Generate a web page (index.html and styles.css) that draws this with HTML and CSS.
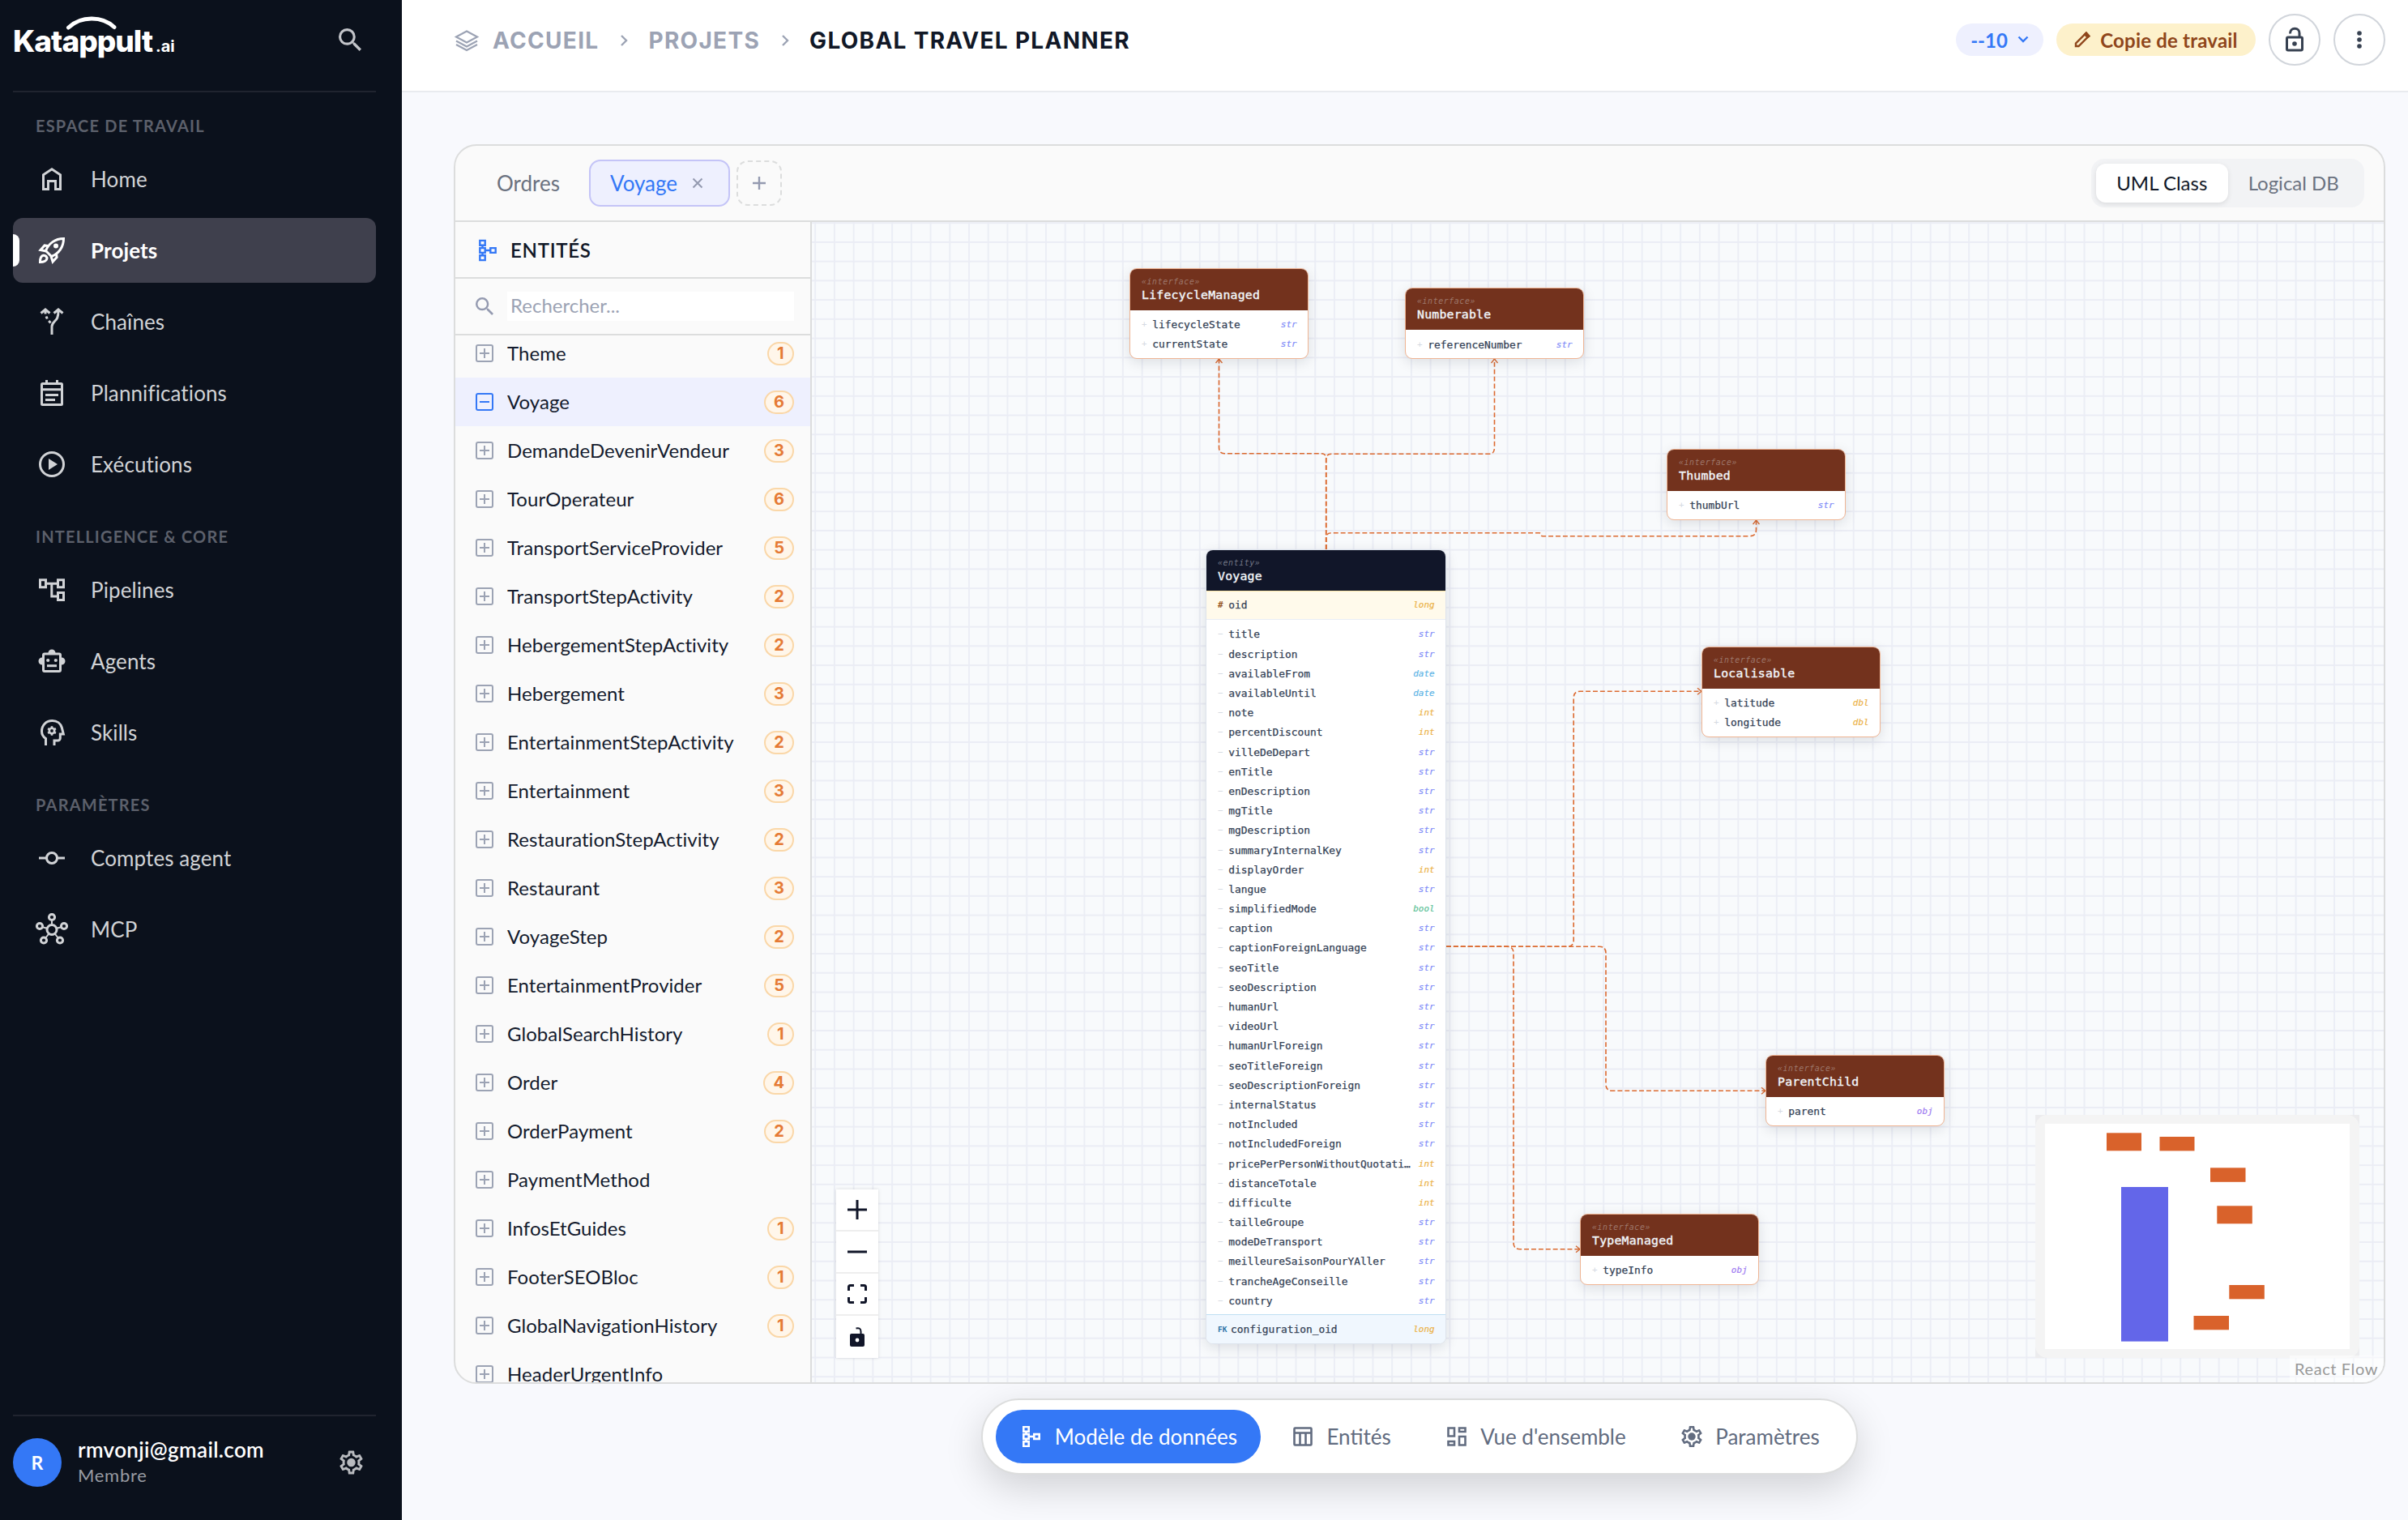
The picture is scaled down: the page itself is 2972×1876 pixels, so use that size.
FILE: index.html
```html
<!DOCTYPE html>
<html lang="fr">

<head>
    <meta charset="utf-8">
    <title>Katappult.ai - Global Travel Planner</title>
    <link rel="stylesheet" href="styles.css">
</head>

<body>
    <!-- icons -->
    <svg class="sprite" width="0" height="0">
        <symbol id="i-search" viewBox="3 3 17.5 17.5">
            <path d="M15.5 14h-.79l-.28-.27A6.47 6.47 0 0 0 16 9.5 6.5 6.5 0 1 0 9.5 16c1.61 0 3.09-.59 4.23-1.57l.27.28v.79l5 4.99L20.49 19l-4.99-5zm-6 0C7.01 14 5 11.99 5 9.5S7.01 5 9.5 5 14 7.01 14 9.5 11.99 14 9.5 14z" fill="currentColor" stroke="none" />
        </symbol>
        <symbol id="i-home" viewBox="0 0 40 40">
            <path d="M9.5 14.8L20 7.8l10.5 7v17.7h-6v-10h-9v10h-6z" />
        </symbol>
        <symbol id="i-rocket" viewBox="0 0 40 40">
            <path d="M12.5 20.5C16 11.5 24 5.5 34.5 5.5 34.5 16 28.500 24 19.500 27.500z" />
            <path d="M15 14.500l-4-.6L6 19.500l7 1.500M25.500 24.500l.6 4-5 5.500-2-6.500" />
            <path d="M5.500 34.500c0-3 .5-7.500 3.800-8.200 3-.5 5.200 1.900 4.400 4.500-1 2.900-4.700 3.700-8.200 3.700z" />
            <circle cx="25" cy="14.500" r="3" fill="currentColor" stroke="none" />
        </symbol>
        <symbol id="i-route" viewBox="0 0 40 40">
            <path d="M28 7c0 8-2 10-4.500 12.500C21 22 20 23 20 26v10M22.500 9.500L28 5l5.500 4.500M6.500 9.500L12 5l5.500 4.500M12 6v4.500M13 13.500l1.300 3M16.200 19l2.300 2.500" />
        </symbol>
        <symbol id="i-calendar" viewBox="0 0 40 40">
            <path d="M8.500 8.500h23a1 1 0 0 1 1 1v24a1 1 0 0 1-1 1h-23a1 1 0 0 1-1-1v-24a1 1 0 0 1 1-1zM7.500 15.800h25M13.500 4v5M26.500 4v5M12 22.500h16M12 28.500h12" />
        </symbol>
        <symbol id="i-play" viewBox="0 0 40 40">
            <circle cx="20" cy="20" r="14.5" />
            <path d="M16 13l11 7-11 7z" fill="currentColor" stroke="none" />
        </symbol>
        <symbol id="i-pipeline" viewBox="0 0 40 40">
            <path d="M5.500 7.700h7v9h-7zM27.500 7.700h7v9h-7zM27.500 23.500h7v9h-7zM13 12.200h14M19.800 12v16H27" />
        </symbol>
        <symbol id="i-robot" viewBox="0 0 40 40">
            <rect x="9.5" y="11" width="21" height="21.5" rx="1.5" />
            <path d="M8 15.500v9a4.500 4.500 0 0 1 0-9zM32 15.500v9a4.500 4.500 0 0 0 0-9zM15.500 10a4.500 4.500 0 0 1 9 0z" fill="currentColor" stroke="none" />
            <path d="M14 25.700h12" />
            <circle cx="15.2" cy="19" r="2.1" fill="currentColor" stroke="none" />
            <circle cx="24.8" cy="19" r="2.1" fill="currentColor" stroke="none" />
        </symbol>
        <symbol id="i-skills" viewBox="0 0 40 40">
            <path d="M12.500 36v-8.500C9.500 25.500 7.500 22.500 7.500 18.500c0-7.500 5.500-13 13-13 6 0 10.500 3.500 11.800 8.500l2 8h-4v5a3 3 0 0 1-3 3H23v6" />
            <circle cx="20" cy="18" r="3.2" stroke-width="2.6" />
            <path d="M20 12.300v2.500M20 21.200v2.500M15.100 15.100l2.100 1.200M22.800 19.700l2.100 1.200M15.100 20.900l2.100-1.200M22.800 16.300l2.100-1.200" stroke-width="2.6" />
        </symbol>
        <symbol id="i-commit" viewBox="0 0 40 40">
            <circle cx="20" cy="20" r="6.5" />
            <path d="M4 20h9.500M26.500 20H36" />
        </symbol>
        <symbol id="i-hub" viewBox="0 0 40 40">
            <circle cx="20" cy="20.5" r="6" />
            <circle cx="20" cy="5" r="3.6" />
            <circle cx="5" cy="16" r="3.6" />
            <circle cx="35" cy="16" r="3.6" />
            <circle cx="10" cy="33.5" r="3.6" />
            <circle cx="30" cy="33.5" r="3.6" />
            <path d="M20 9v5M8.500 17.200l5.500 1.600M31.500 17.200L26 18.800M12.300 30.500l4-5M27.700 30.500l-4-5" stroke-width="2" />
        </symbol>
        <symbol id="i-gear" viewBox="2 2 20 20">
            <path fill="currentColor" stroke="none" d="M19.43 12.98c.04-.32.07-.64.07-.98 0-.34-.03-.66-.07-.98l2.110-1.650c.19-.15.24-.42.12-.64l-2-3.460c-.09-.16-.26-.25-.44-.25-.06 0-.12.01-.17.03l-2.490 1c-.52-.4-1.080-.73-1.690-.98l-.38-2.650C14.460 2.180 14.250 2 14 2h-4c-.25 0-.46.18-.49.42l-.38 2.650c-.61.25-1.170.59-1.690.98l-2.490-1c-.06-.02-.12-.03-.18-.03-.17 0-.34.09-.43.25l-2 3.460c-.13.22-.07.49.12.64l2.110 1.650c-.04.32-.07.65-.07.98 0 .33.03.66.07.98l-2.110 1.650c-.19.15-.24.42-.12.64l2 3.460c.09.16.26.25.44.25.06 0 .12-.01.17-.03l2.490-1c.52.4 1.080.73 1.690.98l.38 2.650c.03.24.24.42.49.42h4c.25 0 .46-.18.49-.42l.38-2.650c.61-.25 1.170-.59 1.690-.98l2.490 1c.06.02.12.03.18.03.17 0 .34-.09.43-.25l2-3.460c.12-.22.07-.49-.12-.64l-2.110-1.650zm-1.980-1.710c.04.31.05.52.05.73 0 .21-.02.43-.05.73l-.14 1.130.89.7 1.080.84-.7 1.210-1.270-.51-1.040-.42-.9.68c-.43.32-.84.56-1.250.73l-1.060.43-.16 1.130-.2 1.350h-1.400l-.19-1.350-.16-1.130-1.060-.43c-.43-.18-.83-.41-1.230-.71l-.91-.7-1.060.43-1.270.51-.7-1.210 1.080-.84.89-.7-.14-1.130c-.03-.31-.05-.54-.05-.74s.02-.43.05-.73l.14-1.130-.89-.7-1.080-.84.7-1.210 1.270.51 1.040.42.9-.68c.43-.32.84-.56 1.250-.73l1.060-.43.16-1.130.2-1.350h1.390l.19 1.350.16 1.130 1.060.43c.43.18.83.41 1.230.71l.91.7 1.060-.43 1.270-.51.7 1.210-1.070.85-.89.7.14 1.130z" />
            <circle cx="12" cy="12" r="3.6" fill="currentColor" stroke="none" />
        </symbol>
        <symbol id="i-layers" viewBox="0 0 32 28">
            <path d="M16 2.500L29 9.500 16 16.500 3 9.500zM3 14.500l13 7 13-7M3 19l13 7 13-7" />
        </symbol>
        <symbol id="i-schema" viewBox="0 1 24 26">
            <path d="M2.300 1.900h6.400v5.800h-6.400zM2.300 11.100h6.400v5.800h-6.400zM2.300 20.300h6.400v5.800h-6.400zM15.300 11.100h6.400v5.800h-6.400zM5.500 8v3M5.500 17v3M9 14h6" />
        </symbol>
        <symbol id="i-table" viewBox="0 0 26 26">
            <path d="M3.500 2.500h19a1 1 0 0 1 1 1v19a1 1 0 0 1-1 1h-19a1 1 0 0 1-1-1v-19a1 1 0 0 1 1-1zM2.500 8.500h21M9.500 8.500v15M16.500 8.500v15" />
        </symbol>
        <symbol id="i-dashboard" viewBox="0 0 26 26">
            <path d="M2.500 2.500h7.500v10H2.500zM16 2.500h7.500V7H16zM2.500 19h7.500v4.500H2.500zM16 13h7.500v10.500H16z" />
        </symbol>
        <symbol id="i-lock-open" viewBox="0 0 24 32">
            <path d="M4 13h16a1.500 1.500 0 0 1 1.500 1.500v13A1.500 1.500 0 0 1 20 29H4a1.500 1.500 0 0 1-1.500-1.500v-13A1.500 1.500 0 0 1 4 13zM6.500 8.500C6.500 4 9 2.300 12.300 2.300S18 4.500 18 8v5" />
            <circle cx="12" cy="21" r="2.8" fill="currentColor" stroke="none" />
        </symbol>
    </svg>

    <div class="app">
        <aside class="sidebar">
            <div class="sidebar-head">
                <div class="logo">
                    <svg class="logo-arc" viewBox="0 0 64 18">
                        <path d="M3.500 14C19-.5 45-.5 60 13.500" />
                    </svg>
                    Katappult<small>.ai</small>
                </div>
                <svg class="head-search">
                    <use href="#i-search" />
                </svg>
            </div>

            <nav class="nav">
                <div class="nav-section">
                    <div class="nav-label">ESPACE DE TRAVAIL</div>
                    <a class="nav-item"><svg><use href="#i-home" /></svg>Home</a>
                    <a class="nav-item active"><svg><use href="#i-rocket" /></svg>Projets</a>
                    <a class="nav-item"><svg><use href="#i-route" /></svg>Chaînes</a>
                    <a class="nav-item"><svg><use href="#i-calendar" /></svg>Plannifications</a>
                    <a class="nav-item"><svg><use href="#i-play" /></svg>Exécutions</a>
                </div>
                <div class="nav-section">
                    <div class="nav-label">INTELLIGENCE &amp; CORE</div>
                    <a class="nav-item"><svg><use href="#i-pipeline" /></svg>Pipelines</a>
                    <a class="nav-item"><svg><use href="#i-robot" /></svg>Agents</a>
                    <a class="nav-item"><svg><use href="#i-skills" /></svg>Skills</a>
                </div>
                <div class="nav-section">
                    <div class="nav-label">PARAMÈTRES</div>
                    <a class="nav-item"><svg><use href="#i-commit" /></svg>Comptes agent</a>
                    <a class="nav-item"><svg><use href="#i-hub" /></svg>MCP</a>
                </div>
            </nav>

            <div class="user">
                <div class="avatar">R</div>
                <div class="user-info">
                    <div class="user-mail">rmvonji@gmail.com</div>
                    <div class="user-role">Membre</div>
                </div>
                <svg class="user-gear">
                    <use href="#i-gear" />
                </svg>
            </div>
        </aside>

        <main class="main">
            <header class="topbar">
                <div class="crumbs">
                    <svg class="crumb-icon"><use href="#i-layers" /></svg>
                    <span class="crumb">ACCUEIL</span>
                    <svg class="crumb-sep" viewBox="0 0 10 16"><path d="M2 2l6 6-6 6" /></svg>
                    <span class="crumb">PROJETS</span>
                    <svg class="crumb-sep" viewBox="0 0 10 16"><path d="M2 2l6 6-6 6" /></svg>
                    <span class="crumb current">GLOBAL TRAVEL PLANNER</span>
                </div>
                <div class="top-actions">
                    <span class="pill version">--10
                        <svg viewBox="0 0 14 10"><path d="M1.500 1.500L7 7l5.500-5.500" /></svg>
                    </span>
                    <span class="pill working">
                        <svg viewBox="0 0 20 20"><path d="M2 18v-3.500L14.500 2 18 5.500 5.500 18z" /><path d="M13 3.500l3.500 3.500 2-1.500L15 1.500z" fill="currentColor" /></svg>
                        Copie de travail
                    </span>
                    <button class="round"><svg class="lock"><use href="#i-lock-open" /></svg></button>
                    <button class="round">
                        <svg class="dots" viewBox="0 0 6 24"><circle cx="3" cy="4" r="2.8" /><circle cx="3" cy="12" r="2.8" /><circle cx="3" cy="20" r="2.8" /></svg>
                    </button>
                </div>
            </header>

            <section class="panel">
                <div class="tabs">
                    <div class="tab">Ordres</div>
                    <div class="tab selected">Voyage
                        <svg viewBox="0 0 14 14"><path d="M1.500 1.500l11 11M12.500 1.500l-11 11" /></svg>
                    </div>
                    <div class="tab-add"><svg viewBox="0 0 16 16"><path d="M8 0v16M0 8h16" /></svg></div>
                    <div class="toggle">
                        <span class="on">UML Class</span>
                        <span>Logical DB</span>
                    </div>
                </div>
                <div class="workspace">
                    <div class="entities">
                        <div class="entities-head">
                            <svg><use href="#i-schema" /></svg>ENTITÉS
                        </div>
                        <div class="entities-search">
                            <svg><use href="#i-search" /></svg>
                            <input type="text" placeholder="Rechercher...">
                        </div>
                        <div class="entities-list" id="list"></div>
                    </div>

                    <div class="canvas" id="canvas">
                        <svg class="grid" width="1940" height="1432">
                            <defs>
                                <pattern id="lines" width="23.733" height="23.733" patternUnits="userSpaceOnUse" x="-7.7" y="-10.67">
                                    <path d="M11.866 0v23.733M0 11.866h23.733" stroke="#ebedf5" stroke-width="1.8" />
                                </pattern>
                            </defs>
                            <rect width="1940" height="1432" fill="url(#lines)" />
                        </svg>
                        <svg class="edges" width="1940" height="1432">
                            <defs>
                                <marker id="arrow" viewBox="0 0 10 10" refX="6" refY="5" markerWidth="10" markerHeight="10" markerUnits="userSpaceOnUse" orient="auto">
                                    <path d="M1 1l5 4-5 4" />
                                </marker>
                            </defs>
                            <path d="M634.7 404V292q0-6.300-6.300-6.300H509q-6.500 0-6.500-8V169" marker-end="url(#arrow)" />
                            <path d="M634.7 404V293q0-6.700 6.500-6.700H836q6.500 0 6.500-8V169" marker-end="url(#arrow)" />
                            <path d="M634.7 404V390q0-6.300 6.500-6.300H898q2 0 2 2t2 2h255.500q8 0 8-8V368" marker-end="url(#arrow)" />
                            <path d="M783 894.3H932q8.200 0 8.200-8V587.300q0-8 8-8H1098" marker-end="url(#arrow)" />
                            <path d="M783 894.3H972q8 0 8 8V1064.300q0 8 8 8H1177" marker-end="url(#arrow)" />
                            <path d="M783 894.3H858q8 0 8 8V1259.700q0 8 8 8H948" marker-end="url(#arrow)" />
                        </svg>

                        <div class="controls">
                            <button><svg viewBox="0 0 24 24"><path d="M12 0v24M0 12h24" /></svg></button>
                            <button><svg viewBox="0 0 24 24"><path d="M0 12h24" /></svg></button>
                            <button><svg viewBox="0 0 24 24"><path d="M1.500 8V3.500q0-2 2-2H8M16 1.500h4.500q2 0 2 2V8M22.500 16v4.500q0 2-2 2H16M8 22.500H3.500q-2 0-2-2V16" /></svg></button>
                            <button><svg viewBox="0 0 24 24"><path d="M10.500 1.500q6-1.500 6 4V9" stroke-width="2" /><path d="M5 8h14a2 2 0 0 1 2 2v12a2 2 0 0 1-2 2H5a2 2 0 0 1-2-2V10a2 2 0 0 1 2-2zM12 13.600a2.400 2.400 0 1 0 0 4.800 2.400 2.400 0 0 0 0-4.800z" fill="currentColor" fill-rule="evenodd" stroke="none" /></svg></button>
                        </div>

                        <div class="minimap">
                            <svg viewBox="0 0 400 300">
                                <rect width="400" height="300" fill="#ececee" />
                                <rect width="400" height="300" rx="15" fill="#f4f4f4" />
                                <rect x="12" y="11" width="376" height="278" fill="#fff" />
                                <g fill="#d9622b">
                                    <rect x="88" y="22.3" width="43" height="22" />
                                    <rect x="153.5" y="27" width="43" height="17.4" />
                                    <rect x="216" y="65.3" width="43.5" height="17.5" />
                                    <rect x="224.3" y="112.3" width="43.5" height="22" />
                                    <rect x="239.3" y="210" width="43.5" height="17.3" />
                                    <rect x="195.5" y="248" width="43.5" height="17.3" />
                                </g>
                                <rect x="106" y="89" width="58" height="190.6" fill="#6366e9" />
                            </svg>
                        </div>
                        <div class="attribution">React Flow</div>
                    </div>
                </div>
            </section>

            <nav class="dock">
                <a class="dock-item active"><svg><use href="#i-schema" /></svg>Modèle de données</a>
                <a class="dock-item"><svg><use href="#i-table" /></svg>Entités</a>
                <a class="dock-item"><svg><use href="#i-dashboard" /></svg>Vue d'ensemble</a>
                <a class="dock-item"><svg><use href="#i-gear" /></svg>Paramètres</a>
            </nav>
        </main>
    </div>
    <script src="script.js"></script>
</body>

</html>
```

FILE: styles.css
```css
* {
    box-sizing: border-box;
    margin: 0;
    padding: 0;
}

body {
    font-family: Lato, "Liberation Sans", sans-serif;
    background: #f8f9fd;
    overflow: hidden;
}

svg {
    display: block;
    fill: none;
    stroke: currentColor;
    flex: none;
}

button {
    background: #fff;
    border: none;
}

.sprite {
    position: absolute;
}

.app {
    display: flex;
    width: 2972px;
    height: 1876px;
}

/* sidebar */
.sidebar {
    display: flex;
    flex-direction: column;
    width: 496px;
    padding: 0 32px 0 16px;
    background: #0b111c;
    color: #d1d3d6;
}

.sidebar-head {
    display: flex;
    justify-content: space-between;
    align-items: center;
    height: 114px;
    padding: 0 18px 14px 0;
    border-bottom: 2px solid #20242f;
}

.logo {
    position: relative;
    padding-top: 9px;
    color: #fff;
    font: 800 37px/44px Inter, sans-serif;
    letter-spacing: -1px;
}

.logo small {
    font-size: 20px;
    font-weight: 700;
    letter-spacing: 0;
    margin-left: 4px;
}

.logo-arc {
    position: absolute;
    left: 65px;
    top: 0;
    width: 64px;
    height: 18px;
    stroke-width: 5;
    stroke-linecap: round;
}

.head-search {
    width: 28px;
    height: 28px;
    color: #c3c5ca;
}

.nav {
    flex: 1;
}

.nav-section {
    padding-top: 29px;
}

.nav-section + .nav-section {
    margin-top: 8px;
}

.nav-label {
    height: 24px;
    margin: 0 0 14px 28px;
    color: #5c606b;
    font-size: 20px;
    font-weight: 700;
    line-height: 24px;
    letter-spacing: 1.2px;
}

.nav-item {
    position: relative;
    display: flex;
    align-items: center;
    gap: 28px;
    height: 80px;
    margin-bottom: 8px;
    padding-left: 28px;
    border-radius: 12px;
    font-size: 26px;
    letter-spacing: 0.1px;
}

.nav-item svg {
    width: 40px;
    height: 40px;
    stroke-width: 3;
}

.nav-item.active {
    background: #3f404d;
    color: #fff;
    font-weight: 700;
}

.nav-item.active::before {
    content: "";
    position: absolute;
    left: 0;
    top: 20px;
    width: 8px;
    height: 40px;
    border-radius: 0 8px 8px 0;
    background: #fff;
}

.user {
    display: flex;
    align-items: center;
    height: 130px;
    padding: 0 16px 14px 0;
    border-top: 2px solid #20242f;
}

.avatar {
    width: 60px;
    height: 60px;
    margin-right: 20px;
    border-radius: 50%;
    background: #3478f6;
    color: #fff;
    font-size: 23px;
    font-weight: 700;
    line-height: 60px;
    text-align: center;
}

.user-info {
    flex: 1;
}

.user-mail {
    color: #fff;
    font-size: 26px;
    font-weight: 600;
    line-height: 32px;
    letter-spacing: 0.35px;
}

.user-role {
    color: #989ba2;
    font-size: 22px;
    line-height: 32px;
    letter-spacing: 0.7px;
}

.user-gear {
    width: 29px;
    height: 30px;
    color: #b9bbbf;
}

/* top bar */
.main {
    display: flex;
    flex-direction: column;
    flex: 1;
}

.topbar {
    display: flex;
    justify-content: space-between;
    align-items: center;
    height: 114px;
    padding: 0 28px 14px 64px;
    background: #fff;
    border-bottom: 2px solid #e9ebef;
}

.crumbs {
    display: flex;
    align-items: center;
    margin-top: 2px;
    color: #9ca3b4;
}

.crumb {
    font: 700 28px/36px Inter, sans-serif;
    letter-spacing: 1.3px;
}

.crumb.current {
    color: #111827;
}

.crumb-icon {
    width: 32px;
    height: 28px;
    margin-right: 16px;
    stroke-width: 2.2;
}

.crumb-sep {
    width: 10px;
    height: 16px;
    margin: 0 25px 0 26px;
    stroke-width: 2.4;
}

.top-actions {
    display: flex;
    align-items: center;
    gap: 16px;
}

.pill {
    display: flex;
    align-items: center;
    justify-content: center;
    height: 40px;
    border-radius: 20px;
    font-size: 24px;
    font-weight: 700;
}

.version {
    width: 108px;
    gap: 12px;
    background: #eef0fe;
    color: #3478f6;
}

.version svg {
    width: 14px;
    height: 10px;
    stroke-width: 2.4;
}

.working {
    width: 246px;
    gap: 12px;
    background: #fdf1cb;
    color: #8f461b;
    letter-spacing: 0.2px;
}

.working svg {
    width: 20px;
    height: 20px;
    stroke-width: 2.4;
}

.round {
    display: flex;
    align-items: center;
    justify-content: center;
    width: 64px;
    height: 64px;
    border: 2px solid #d1d5db;
    border-radius: 50%;
    color: #374151;
}

.lock {
    width: 24px;
    height: 32px;
    stroke-width: 3;
}

.dots {
    width: 6px;
    height: 24px;
    fill: currentColor;
    stroke: none;
}

/* model panel */
.panel {
    display: flex;
    flex-direction: column;
    height: 1530px;
    margin: 64px 28px 0 64px;
    border: 2px solid #dcdddd;
    border-radius: 28px;
    background: #fafafa;
    overflow: hidden;
}

.tabs {
    display: flex;
    align-items: center;
    height: 94px;
    padding: 0 24px 0 25px;
    border-bottom: 2px solid #dcdddd;
    color: #6b7280;
    font-size: 26px;
}

.tab {
    display: flex;
    align-items: center;
    height: 58px;
    padding: 0 26px;
}

.tab.selected {
    width: 174px;
    margin-left: 10px;
    padding: 0 0 0 24px;
    gap: 18px;
    border: 2px solid #c4c4f7;
    border-radius: 14px;
    background: #eef0fe;
    color: #3478f6;
}

.tab.selected svg {
    width: 14px;
    height: 14px;
    stroke: #949ab0;
    stroke-width: 2;
}

.tab-add {
    display: flex;
    align-items: center;
    justify-content: center;
    width: 56px;
    height: 56px;
    margin-left: 8px;
    border: 2px dashed #dcdddd;
    border-radius: 14px;
    color: #949ab0;
}

.tab-add svg {
    width: 16px;
    height: 16px;
    stroke-width: 2.4;
}

.toggle {
    display: flex;
    height: 60px;
    width: 337px;
    margin-left: auto;
    padding: 6px;
    border-radius: 16px;
    background: #f2f3f5;
    font-size: 24px;
    line-height: 48px;
    text-align: center;
}

.toggle span {
    flex: 1;
}

.toggle .on {
    border-radius: 12px;
    background: #fff;
    color: #111827;
    box-shadow: 0 2px 6px rgba(0, 0, 0, 0.1);
}

.workspace {
    display: flex;
    flex: 1;
    min-height: 0;
}

.entities {
    display: flex;
    flex-direction: column;
    width: 440px;
    border-right: 2px solid #dcdddd;
}

.entities-head {
    display: flex;
    align-items: center;
    height: 70px;
    padding: 1px 0 0 28px;
    border-bottom: 2px solid #dcdddd;
    color: #111827;
    font-size: 24px;
    font-weight: 600;
    letter-spacing: 0.7px;
}

.entities-head svg {
    width: 24px;
    height: 28px;
    margin-right: 16px;
    color: #3478f6;
    stroke-width: 2.4;
}

.entities-search {
    display: flex;
    align-items: center;
    height: 70px;
    padding: 0 20px 0 25px;
    border-bottom: 2px solid #dcdddd;
    color: #949ab0;
}

.entities-search svg {
    width: 22px;
    height: 22px;
    margin-right: 17px;
}

.entities-search input {
    flex: 1;
    height: 36px;
    padding: 0 4px 3px;
    border: none;
    background: #fff;
    font: 24px Lato, sans-serif;
}

.entities-search input::placeholder {
    color: #9ca3b4;
}

.entities-list {
    flex: 1;
    min-height: 0;
    padding-top: 52px;
    overflow: hidden;
}

/* the list is scrolled a little, its first row is cut */
.entities-list .entity:first-child {
    margin-top: -60px;
}

.entity {
    display: flex;
    align-items: center;
    height: 60px;
    padding: 0 20px 0 25px;
    color: #141b2d;
    font-size: 24px;
    letter-spacing: 0.05px;
}

.entity .label {
    margin-top: -2px;
}

.entity.open {
    background: #eef0fe;
}

.entity svg {
    width: 22px;
    height: 22px;
    margin-right: 17px;
    stroke: #9ca3b4;
    stroke-width: 2;
}

.entity.open svg {
    stroke: #3478f6;
}

.count {
    min-width: 33px;
    height: 29px;
    margin-left: auto;
    padding: 0 10px;
    border: 2px solid #fad7a8;
    border-radius: 15px;
    background: #fff6ea;
    color: #e57a35;
    font: 700 20px/25px Inter, sans-serif;
}

/* diagram */
.canvas {
    position: relative;
    flex: 1;
    background: #f8fafc;
    font-family: "DejaVu Sans Mono", monospace;
}

.grid,
.edges {
    position: absolute;
    left: 0;
    top: 0;
}

.grid rect {
    stroke: none;
}

.edges path {
    stroke: #dc6a30;
    stroke-width: 1.6;
    stroke-dasharray: 5.93 2.97;
}

.edges marker path {
    stroke-width: 1.3;
    stroke-dasharray: none;
}

.node {
    position: absolute;
    width: 221px;
    border: 1px solid #efb493;
    border-radius: 9px;
    background: #fff;
    box-shadow: 0 4px 16px rgba(15, 23, 42, 0.12);
    overflow: hidden;
}

.node.class {
    width: 297px;
    border-color: #dde3ec;
}

.node-head {
    height: 50.5px;
    padding: 10px 14px 0;
    background: #73321d;
}

.class .node-head {
    height: 50px;
    background: #111629;
}

.stereotype {
    height: 12px;
    color: #9d776b;
    font-size: 9.9px;
    font-style: italic;
    line-height: 12px;
    letter-spacing: 0.6px;
}

.class .stereotype {
    color: #717686;
}

.node-name {
    color: #f1f5f9;
    font-size: 14.8px;
    line-height: 20px;
    letter-spacing: 0.22px;
    -webkit-text-stroke: 0.4px;
}

.node-body {
    padding: 6.2px 0 5px;
}

.attr {
    display: flex;
    align-items: center;
    height: 24.2px;
    padding: 0 13.5px 0 14px;
    color: #334155;
    font-size: 12.86px;
    white-space: nowrap;
}

.attr .mark {
    flex: none;
    width: 13.3px;
    color: #d5dae2;
    font-size: 10.9px;
}

.attr .name {
    flex: 1;
    overflow: hidden;
    text-overflow: ellipsis;
    -webkit-text-stroke: 0.25px;
}

.attr .type {
    margin-left: 6px;
    font-size: 10.9px;
    font-style: italic;
    -webkit-text-stroke: 0.2px;
}

.attr.pk {
    height: 35.7px;
    background: #fffaeb;
    border-top: 1px solid #fbe6a6;
    border-bottom: 1px solid #e9edf5;
}

.pk .mark {
    color: #9a5a2a;
    font-weight: 700;
}

.attr.fk {
    height: 35.6px;
    background: #f0f7fe;
    border-top: 1px solid #bfdff2;
}

.fk .mark {
    width: 16px;
    color: #2f74a8;
    font-size: 9.5px;
    font-weight: 700;
}

.str {
    color: #818cf8;
}

.obj {
    color: #a07cf2;
}

.int,
.long,
.dbl {
    color: #ecb247;
}

.date {
    color: #5db4e6;
}

.bool {
    color: #5ec39a;
}

.controls {
    position: absolute;
    left: 30px;
    bottom: 30px;
    width: 52px;
    box-shadow: 0 0 4px rgba(0, 0, 0, 0.14);
}

.controls button {
    display: flex;
    align-items: center;
    justify-content: center;
    width: 52px;
    height: 52px;
    border-bottom: 2px solid #eee;
    color: #111629;
}

.controls button:last-child {
    border-bottom: none;
}

.controls svg {
    width: 24px;
    height: 24px;
    stroke-width: 3;
}

.minimap {
    position: absolute;
    right: 30px;
    bottom: 30px;
}

.minimap svg {
    width: 400px;
    height: 300px;
    stroke: none;
}

.attribution {
    position: absolute;
    right: 0;
    bottom: 0;
    height: 33px;
    padding: 0 7px 0 6px;
    background: rgba(255, 255, 255, 0.5);
    color: #999;
    font: 20px/33px Lato, sans-serif;
    letter-spacing: 0.6px;
}

/* bottom dock */
.dock {
    position: relative;
    display: flex;
    align-self: center;
    gap: 8px;
    height: 94px;
    margin: 18px 0 0 36px;
    padding: 12px 16px;
    border: 2px solid #dcdddd;
    border-radius: 47px;
    background: #fff;
    box-shadow: 0 16px 48px rgba(0, 0, 0, 0.16);
}

.dock-item {
    display: flex;
    align-items: center;
    height: 66px;
    padding: 0 29.5px 0 30px;
    gap: 15px;
    border-radius: 33px;
    color: #626c80;
    font-size: 26px;
}

.dock-item svg {
    width: 28px;
    height: 26px;
    stroke-width: 2.6;
}

.dock-item.active {
    background: #3478f6;
    color: #fff;
}
```

FILE: script.js
```js
var entities = [
    ['Theme', 1], ['Voyage', 6], ['DemandeDevenirVendeur', 3], ['TourOperateur', 6],
    ['TransportServiceProvider', 5], ['TransportStepActivity', 2], ['HebergementStepActivity', 2],
    ['Hebergement', 3], ['EntertainmentStepActivity', 2], ['Entertainment', 3],
    ['RestaurationStepActivity', 2], ['Restaurant', 3], ['VoyageStep', 2],
    ['EntertainmentProvider', 5], ['GlobalSearchHistory', 1], ['Order', 4], ['OrderPayment', 2],
    ['PaymentMethod', 0], ['InfosEtGuides', 1], ['FooterSEOBloc', 1],
    ['GlobalNavigationHistory', 1], ['HeaderUrgentInfo', 0]
];

var nodes = [
    { name: 'LifecycleManaged', x: 392, y: 57, attrs: ['lifecycleState str', 'currentState str'] },
    { name: 'Numberable', x: 732, y: 81.3, attrs: ['referenceNumber str'] },
    { name: 'Thumbed', x: 1055, y: 280, attrs: ['thumbUrl str'] },
    { name: 'Localisable', x: 1098, y: 524, attrs: ['latitude dbl', 'longitude dbl'] },
    { name: 'ParentChild', x: 1177, y: 1028, attrs: ['parent obj'] },
    { name: 'TypeManaged', x: 948, y: 1224, attrs: ['typeInfo obj'] },
    {
        name: 'Voyage', x: 486, y: 404, entity: true, pk: 'oid long', fk: 'configuration_oid long',
        attrs: ['title str', 'description str', 'availableFrom date', 'availableUntil date', 'note int',
            'percentDiscount int', 'villeDeDepart str', 'enTitle str', 'enDescription str', 'mgTitle str',
            'mgDescription str', 'summaryInternalKey str', 'displayOrder int', 'langue str',
            'simplifiedMode bool', 'caption str', 'captionForeignLanguage str', 'seoTitle str',
            'seoDescription str', 'humanUrl str', 'videoUrl str', 'humanUrlForeign str',
            'seoTitleForeign str', 'seoDescriptionForeign str', 'internalStatus str', 'notIncluded str',
            'notIncludedForeign str', 'pricePerPersonWithoutQuotation int', 'distanceTotale int',
            'difficulte int', 'tailleGroupe str', 'modeDeTransport str', 'meilleureSaisonPourYAller str',
            'trancheAgeConseille str', 'country str']
    }
];

function attrRow(attr, mark, cls) {
    var parts = attr.split(' ');
    return '<div class="attr ' + cls + '"><span class="mark">' + mark + '</span>' +
        '<span class="name">' + parts[0] + '</span>' +
        '<span class="type ' + parts[1] + '">' + parts[1] + '</span></div>';
}

var html = '';
for (var i = 0; i < entities.length; i++) {
    var open = entities[i][0] == 'Voyage';
    html += '<div class="entity' + (open ? ' open' : '') + '">' +
        '<svg viewBox="0 0 22 22"><rect x="1" y="1" width="20" height="20" rx="2"/><path d="M5 11h12' +
        (open ? '' : 'M11 5v12') + '"/></svg><span class="label">' + entities[i][0] + '</span>' +
        (entities[i][1] ? '<span class="count">' + entities[i][1] + '</span>' : '') + '</div>';
}
document.getElementById('list').innerHTML = html;

var canvas = document.getElementById('canvas');
nodes.forEach(function (n) {
    var el = document.createElement('div');
    el.className = n.entity ? 'node class' : 'node';
    el.style.left = n.x + 'px';
    el.style.top = n.y + 'px';
    var rows = n.attrs.map(function (a) {
        return attrRow(a, n.entity ? '−' : '+', '');
    }).join('');
    el.innerHTML = '<div class="node-head"><div class="stereotype">' +
        (n.entity ? '«entity»' : '«interface»') + '</div><div class="node-name">' + n.name + '</div></div>' +
        (n.pk ? attrRow(n.pk, '#', 'pk') : '') +
        '<div class="node-body">' + rows + '</div>' +
        (n.fk ? attrRow(n.fk, 'FK', 'fk') : '');
    canvas.appendChild(el);
});
```
